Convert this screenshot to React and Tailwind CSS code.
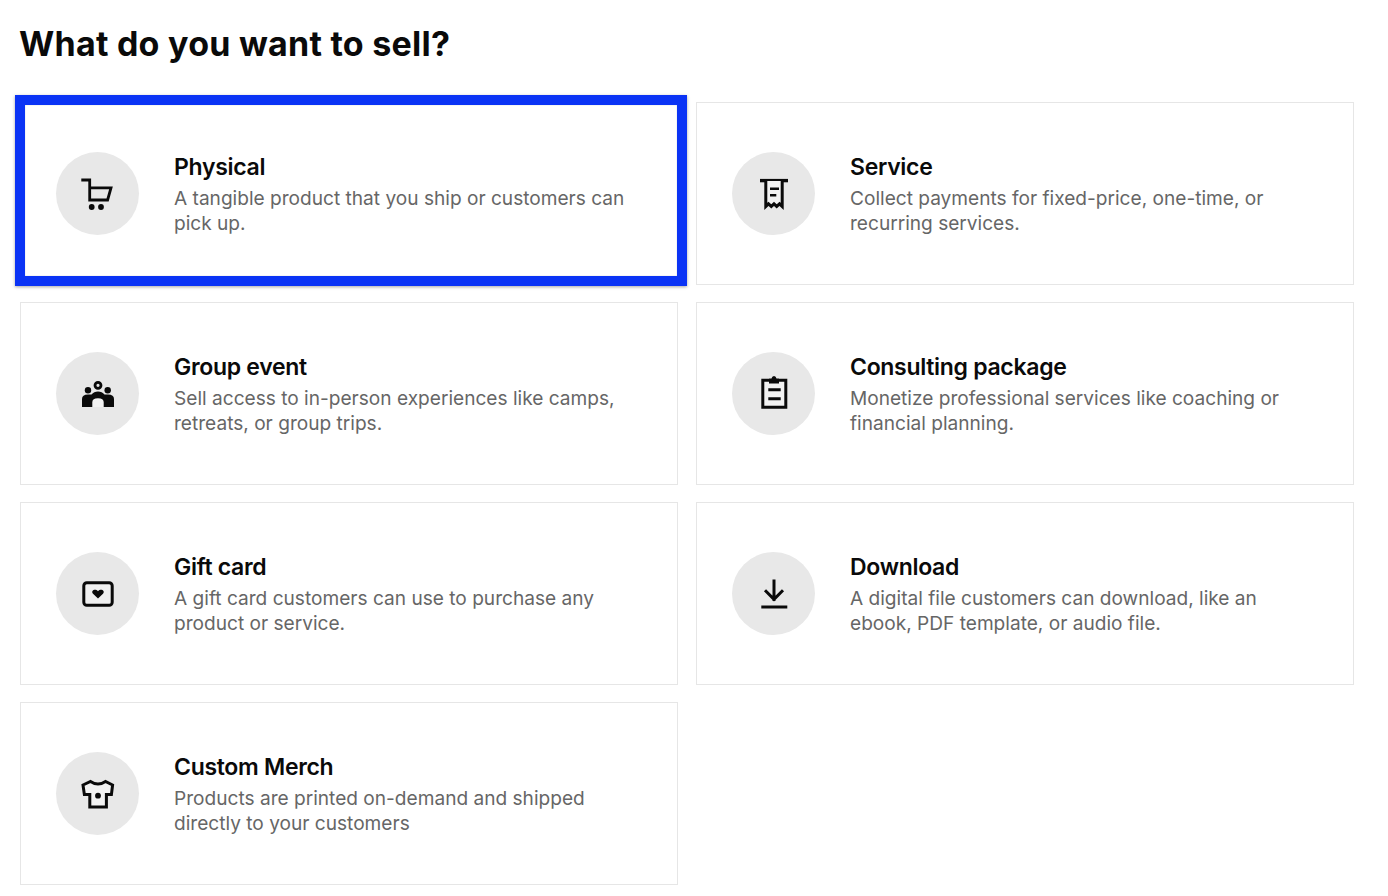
const inter = { fontFamily: '"Inter", "Liberation Sans", sans-serif' }

function Icon({ children }) {
    return (
        <svg width="40" height="40" viewBox="-20 -20 40 40" fill="none" stroke="#0a0a0a" strokeWidth="3">
            {children}
        </svg>
    )
}

const icons = {
    cart: (
        <Icon>
            <path d="M-16.7 -14 H-8.3 V6 H9.6 L13 -6.2 H-8.3" strokeWidth="2.8" />
            <circle cx="-6.3" cy="13" r="2.9" fill="#0a0a0a" stroke="none" />
            <circle cx="3" cy="13" r="2.9" fill="#0a0a0a" stroke="none" />
        </Icon>
    ),
    receipt: (
        <Icon>
            <path d="M-14 -13.4 H14" strokeWidth="3.4" />
            <path fill="#f2f2f2" d="M-8.2 -13 V12.4 L-5.5 9.8 L-2.7 12.4 L0 9.8 L2.7 12.4 L5.5 9.8 L8.2 12.4 V-13" />
            <path d="M-4 -5.3 H5 M-4 1.3 H2.3" strokeWidth="2.6" />
        </Icon>
    ),
    group: (
        <Icon>
            <circle cx="0" cy="-8.7" r="3" strokeWidth="2.8" />
            <circle cx="-10" cy="-3.7" r="3.2" fill="#0a0a0a" stroke="none" />
            <circle cx="9.7" cy="-3.7" r="3.2" fill="#0a0a0a" stroke="none" />
            <path
                fill="#0a0a0a"
                stroke="none"
                d="M-16 13 V5 Q-16 0.5 -10 0.5 H-6.5 Q-4 -2.5 0 -2.5 Q4 -2.5 6.5 0.5 H10 Q16 0.5 16 5 V13 Z"
            />
            <path fill="#f2f2f2" stroke="none" d="M-5.7 13 H5.7 V8 Q5.7 4.2 0 4.2 Q-5.7 4.2 -5.7 8 Z" />
        </Icon>
    ),
    clipboard: (
        <Icon>
            <path fill="#f2f2f2" d="M-5 -13.8 H-11.2 V13.2 H11.8 V-13.8 H5" />
            <path fill="#0a0a0a" stroke="none" d="M-5 -15.5 H-2.5 Q-2 -18 0 -18 Q2 -18 2.5 -15.5 H5 V-10.5 H-5 Z" />
            <path d="M-5.7 -4.3 H6.7 M-5.7 4.7 H6.7" />
        </Icon>
    ),
    gift: (
        <Icon>
            <rect x="-14.2" y="-11.2" width="28.4" height="22.4" rx="3" fill="#f0f0f0" />
            <path
                fill="#0a0a0a"
                stroke="none"
                d="M0 4.6 L-5 -0.2 C-7.6 -3 -3 -6 0 -2.8 C3 -6 7.6 -3 5 -0.2 Z"
            />
        </Icon>
    ),
    download: (
        <Icon>
            <path d="M0 -14.5 V7 M-9 -3.8 L0 5.4 L9 -3.8" />
            <path d="M-12.7 13 H13.3" />
        </Icon>
    ),
    shirt: (
        <Icon>
            <path
                fill="#f2f2f2"
                strokeLinejoin="miter"
                d="M-7.5 -12.6 Q0 -7.5 7.5 -12.6 L14.6 -9 L13.4 0.6 H8.4 V13 H-8.2 V0.6 H-13.6 L-15 -9 Z"
            />
            <circle cx="0" cy="1.7" r="2.9" fill="#0a0a0a" stroke="none" />
        </Icon>
    ),
}

const options = [
    { title: 'Physical', icon: 'cart', selected: true, lines: ['A tangible product that you ship or customers can', 'pick up.'] },
    { title: 'Service', icon: 'receipt', lines: ['Collect payments for fixed-price, one-time, or', 'recurring services.'] },
    { title: 'Group event', icon: 'group', lines: ['Sell access to in-person experiences like camps,', 'retreats, or group trips.'] },
    { title: 'Consulting package', icon: 'clipboard', lines: ['Monetize professional services like coaching or', 'financial planning.'] },
    { title: 'Gift card', icon: 'gift', lines: ['A gift card customers can use to purchase any', 'product or service.'] },
    { title: 'Download', icon: 'download', lines: ['A digital file customers can download, like an', 'ebook, PDF template, or audio file.'] },
    { title: 'Custom Merch', icon: 'shirt', lines: ['Products are printed on-demand and shipped', 'directly to your customers'] },
]

function OptionCard({ option }) {
    return (
        <div className="relative flex h-[183px] items-center gap-[35px] border border-[#e6e6e6] bg-white pl-[35px]">
            <div className="flex h-[83px] w-[83px] shrink-0 items-center justify-center rounded-full bg-[#e8e8e8]">
                {icons[option.icon]}
            </div>
            <div>
                <h2 className="text-[23px] leading-[30px] font-semibold tracking-[-0.3px] text-[#0a0a0a]">{option.title}</h2>
                <p className="mt-[4px] text-[19.1px] leading-[25px] text-[#666666]">
                    {option.lines[0]}
                    <br />
                    {option.lines[1]}
                </p>
            </div>
            {option.selected && (
                <div className="absolute top-[-8px] right-[-10px] bottom-[-2px] left-[-6px] border-[10px] border-[#0a33f5] shadow-[0_1px_3px_rgba(0,0,0,0.35),inset_0_0_1px_rgba(0,0,0,0.4)]" />
            )}
        </div>
    )
}

export default function App() {
    return (
        <div className="min-h-[896px] bg-white pt-[20px] pl-[20px]" style={inter}>
            <h1 className="-ml-px text-[34px] leading-[48px] font-bold tracking-[0.25px] text-[#0a0a0a]">What do you want to sell?</h1>
            <div className="mt-[34px] grid w-[1334px] grid-cols-[658px_658px] gap-x-[18px] gap-y-[17px]">
                {options.map((option) => (
                    <OptionCard key={option.title} option={option} />
                ))}
            </div>
        </div>
    )
}
